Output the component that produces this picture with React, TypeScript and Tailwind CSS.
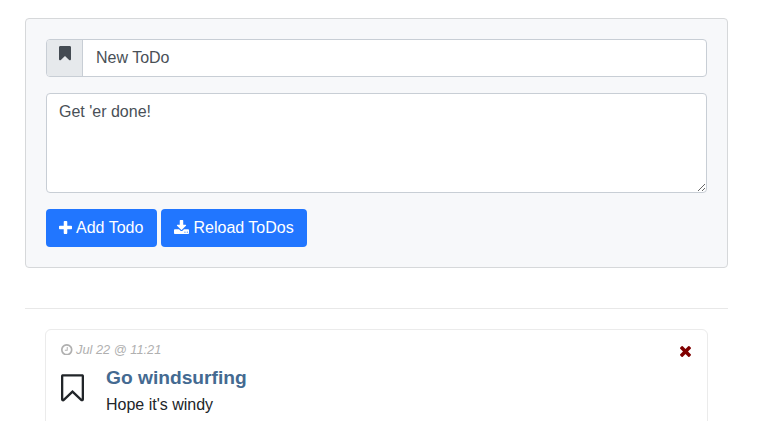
import React from 'react';

type IconProps = { className?: string };

const bookmarkOuter =
  'M1420 128q23 0 44 9 33 13 52.5 41t19.5 62v1289q0 34-19.5 62t-52.5 41q-19 8-44 8-48 0-83-32l-441-424-441 424q-36 33-83 33-23 0-44-9-33-13-52.5-41t-19.5-62v-1289q0-34 19.5-62t52.5-41q21-9 44-9h1048z';

function Icon({ className, box, d }: IconProps & { box: string; d: string }) {
  return (
    <svg className={className} viewBox={box} fill="currentColor" aria-hidden="true">
      <path d={d} />
    </svg>
  );
}

const Bookmark = ({ className }: IconProps) => (
  <Icon className={className} box="256 128 1280 1536" d={bookmarkOuter} />
);

const BookmarkOutline = ({ className }: IconProps) => (
  <Icon
    className={className}
    box="256 128 1280 1536"
    d="M1408 256h-1024v1242l423-406 89-85 89 85 423 406v-1242zm12-128q23 0 44 9 33 13 52.5 41t19.5 62v1289q0 34-19.5 62t-52.5 41q-19 8-44 8-48 0-83-32l-441-424-441 424q-36 33-83 33-23 0-44-9-33-13-52.5-41t-19.5-62v-1289q0-34 19.5-62t52.5-41q21-9 44-9h1048z"
  />
);

const Plus = ({ className }: IconProps) => (
  <Icon
    className={className}
    box="192 128 1408 1408"
    d="M1600 736v192q0 40-28 68t-68 28h-416v416q0 40-28 68t-68 28h-192q-40 0-68-28t-28-68v-416h-416q-40 0-68-28t-28-68v-192q0-40 28-68t68-28h416v-416q0-40 28-68t68-28h192q40 0 68 28t28 68v416h416q40 0 68 28t28 68z"
  />
);

const Download = ({ className }: IconProps) => (
  <Icon
    className={className}
    box="64 0 1664 1536"
    d="M1344 1344q0-26-19-45t-45-19-45 19-19 45 19 45 45 19 45-19 19-45zm256 0q0-26-19-45t-45-19-45 19-19 45 19 45 45 19 45-19 19-45zm128-224v320q0 40-28 68t-68 28h-1472q-40 0-68-28t-28-68v-320q0-40 28-68t68-28h465l135 136q58 56 136 56t136-56l136-136h464q40 0 68 28t28 68zm-325-569q17 41-14 70l-448 448q-18 19-45 19t-45-19l-448-448q-31-29-14-70 17-39 59-39h256v-448q0-26 19-45t45-19h256q26 0 45 19t19 45v448h256q42 0 59 39z"
  />
);

const Clock = ({ className }: IconProps) => (
  <Icon
    className={className}
    box="128 128 1536 1536"
    d="M1024 544v448q0 14-9 23t-23 9h-320q-14 0-23-9t-9-23v-64q0-14 9-23t23-9h224v-352q0-14 9-23t23-9h64q14 0 23 9t9 23zm416 352q0-148-73-273t-198-198-273-73-273 73-198 198-73 273 73 273 198 198 273 73 273-73 198-198 73-273zm224 0q0 209-103 385.5t-279.5 279.5-385.5 103-385.5-103-279.5-279.5-103-385.5 103-385.5 279.5-279.5 385.5-103 385.5 103 279.5 279.5 103 385.5z"
  />
);

const Times = ({ className }: IconProps) => (
  <Icon
    className={className}
    box="302 366 1188 1188"
    d="M1490 1322q0 40-28 68l-136 136q-28 28-68 28t-68-28l-294-294-294 294q-28 28-68 28t-68-28l-136-136q-28-28-28-68t28-68l294-294-294-294q-28-28-28-68t28-68l136-136q28-28 68-28t68 28l294 294 294-294q28-28 68-28t68 28l136 136q28 28 28 68t-28 68l-294 294 294 294q28 28 28 68z"
  />
);

export default function App() {
  return (
    <div className="h-[421px] overflow-hidden bg-white pt-[18px] pr-[30px] pl-[25px] font-['Liberation_Sans',Arial,sans-serif] text-base leading-6 text-[#212529]">
      <form className="h-[250px] rounded border border-[#d6d8da] bg-[#f7f8fa] p-5" onSubmit={(e) => e.preventDefault()}>
        <div className="flex h-[38px] overflow-hidden rounded border border-[#c8ced5] bg-white">
          <span className="flex w-9 shrink-0 justify-center border-r border-[#c8ced5] bg-[#e6e9ec] pt-1.5 text-[#444b53]">
            <Bookmark className="h-[14.5px] w-3" />
          </span>
          <input className="min-w-0 flex-1 px-[13px] text-[#495057] outline-none" defaultValue="New ToDo" />
        </div>
        <textarea
          className="mt-4 block h-[100px] w-full resize-y rounded border border-[#c8ced5] bg-white px-3 py-1.5 text-[#495057] outline-none"
          defaultValue="Get 'er done!"
        />
        <div className="mt-4 flex gap-1 text-white">
          <button className="flex h-[38px] w-[111px] items-center gap-1 rounded bg-[#2176ff] pl-[13px] whitespace-nowrap">
            <Plus className="mb-[2px] size-[13px] shrink-0" />
            Add Todo
          </button>
          <button className="flex h-[38px] w-[146px] items-center gap-[4.5px] rounded bg-[#2176ff] pl-[13px] whitespace-nowrap">
            <Download className="mb-0.5 h-[14px] w-[15px] shrink-0" />
            Reload ToDos
          </button>
        </div>
      </form>
      <hr className="mt-10 border-t border-[#e8e8e8]" />
      <article className="mx-5 mt-5 h-[120px] rounded-md border border-[#ebebeb] px-[15px] pt-2">
        <div className="flex justify-between">
          <div className="flex h-6 items-center gap-[3.5px] text-[12.8px] text-[#b0b0b0] italic">
            <Clock className="mb-px size-[11.5px]" />
            Jul 22 @ 11:21
          </div>
          <button className="mt-2 mr-px flex h-[11px] text-[#800000]">
            <Times className="size-[11px]" />
          </button>
        </div>
        <div className="flex">
          <BookmarkOutline className="mt-[11.5px] h-7 w-[23px] shrink-0" />
          <div className="ml-[22px] pt-[3px]">
            <h2 className="text-[19.2px] leading-[25px] font-bold text-[#446a91]">Go windsurfing</h2>
            <p className="mt-[3px]">Hope it&apos;s windy</p>
          </div>
        </div>
      </article>
    </div>
  );
}
